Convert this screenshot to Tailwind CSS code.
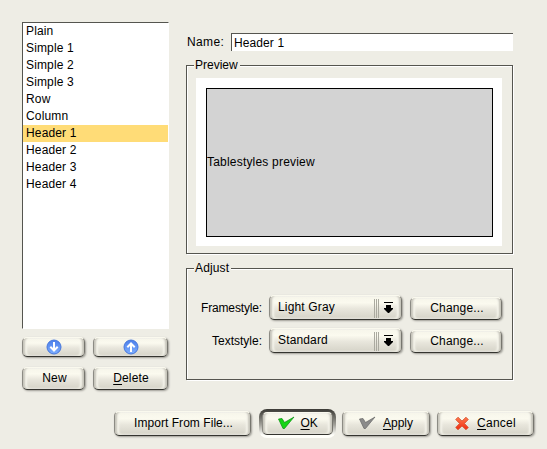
<!DOCTYPE html>
<html lang="en">
<head>
<meta charset="utf-8">
<title>Table styles</title>
<script src="https://cdn.jsdelivr.net/npm/@tailwindcss/browser@4"></script>
</head>
<body class="w-[547px] h-[449px] overflow-hidden bg-[#eeede5] font-['Liberation_Sans',Arial,sans-serif] text-[12px] leading-[17px] tracking-[0.15px] text-black">
<main class="h-[449px] pl-[22px] pt-[22px]">
  <div class="flex h-[387px]">
    <section class="w-[147px]">
      <ul class="h-[307px] border-t border-l border-r border-b border-t-[#55554f] border-l-[#55554f] border-r-white border-b-white bg-white">
        <li class="pl-[3px]">Plain</li>
        <li class="pl-[3px]">Simple 1</li>
        <li class="pl-[3px]">Simple 2</li>
        <li class="pl-[3px]">Simple 3</li>
        <li class="pl-[3px]">Row</li>
        <li class="pl-[3px]">Column</li>
        <li class="pl-[3px] bg-[#ffdc77]">Header 1</li>
        <li class="pl-[3px]">Header 2</li>
        <li class="pl-[3px]">Header 3</li>
        <li class="pl-[3px]">Header 4</li>
      </ul>
      <div class="mt-[8px] flex gap-[8px]">
        <button class="flex items-center justify-center rounded-[5px] border border-t-[#faf9ee] border-b-[#34342f] border-l-[#8c8b84] border-r-[#77766f] bg-[linear-gradient(#f6f5ea,#fbfaef_28%,#e8e6dc_55%,#d9d7cc_90%,#e4e2d8)] shadow-[inset_3px_0_2px_-1px_#c6c4ba,inset_5px_0_2px_-1px_#f8f7ee,inset_-3px_0_2px_-1px_#c6c4ba,inset_-5px_0_2px_-1px_#f8f7ee,1px_1px_2px_#9e9d96] w-[63px] h-[20px]" aria-label="Move down"><svg width="16" height="16" viewBox="0 0 16 16"><defs><linearGradient id="blue" x1="0" y1="0" x2="0" y2="1"><stop stop-color="#4c7fea"/><stop offset="1" stop-color="#7cadff"/></linearGradient></defs><circle cx="8" cy="8" r="7" fill="url(#blue)" stroke="#4777dc"/><path d="M8 3v8M4.300 7.800 8 11.500l3.700-3.700" fill="none" stroke="#fff" stroke-width="2"/></svg></button>
        <button class="flex items-center justify-center rounded-[5px] border border-t-[#faf9ee] border-b-[#34342f] border-l-[#8c8b84] border-r-[#77766f] bg-[linear-gradient(#f6f5ea,#fbfaef_28%,#e8e6dc_55%,#d9d7cc_90%,#e4e2d8)] shadow-[inset_3px_0_2px_-1px_#c6c4ba,inset_5px_0_2px_-1px_#f8f7ee,inset_-3px_0_2px_-1px_#c6c4ba,inset_-5px_0_2px_-1px_#f8f7ee,1px_1px_2px_#9e9d96] w-[75px] h-[20px]" aria-label="Move up"><svg width="16" height="16" viewBox="0 0 16 16"><circle cx="8" cy="8" r="7" fill="url(#blue)" stroke="#4777dc"/><path d="M8 13V5M4.300 8.200 8 4.500l3.700 3.700" fill="none" stroke="#fff" stroke-width="2"/></svg></button>
      </div>
      <div class="mt-[10px] flex gap-[8px]">
        <button class="flex items-center justify-center rounded-[5px] border border-t-[#faf9ee] border-b-[#34342f] border-l-[#8c8b84] border-r-[#77766f] bg-[linear-gradient(#f6f5ea,#fbfaef_28%,#e8e6dc_55%,#d9d7cc_90%,#e4e2d8)] shadow-[inset_3px_0_2px_-1px_#c6c4ba,inset_5px_0_2px_-1px_#f8f7ee,inset_-3px_0_2px_-1px_#c6c4ba,inset_-5px_0_2px_-1px_#f8f7ee,1px_1px_2px_#9e9d96] w-[63px] h-[23px]"><span class="pl-[2px]">New</span></button>
        <button class="flex items-center justify-center rounded-[5px] border border-t-[#faf9ee] border-b-[#34342f] border-l-[#8c8b84] border-r-[#77766f] bg-[linear-gradient(#f6f5ea,#fbfaef_28%,#e8e6dc_55%,#d9d7cc_90%,#e4e2d8)] shadow-[inset_3px_0_2px_-1px_#c6c4ba,inset_5px_0_2px_-1px_#f8f7ee,inset_-3px_0_2px_-1px_#c6c4ba,inset_-5px_0_2px_-1px_#f8f7ee,1px_1px_2px_#9e9d96] w-[75px] h-[23px]"><span class="pl-[1px]"><u class="underline-offset-2">D</u>elete</span></button>
      </div>
    </section>
    <section class="ml-[17px] w-[328px] pt-[11px]">
      <div class="flex h-[19px]">
        <label class="w-[45px] pl-[1px] pt-px tracking-[0.35px]">Name:</label>
        <div class="w-[282px] h-[18px] border-t border-l border-[#55554f] bg-white pl-[2px] pt-[1px] tracking-[0.1px]">Header 1</div>
      </div>
      <div class="relative mt-[13px] w-[327px] h-[189px] border border-[#55554f] shadow-[1px_1px_0_#fff,inset_1px_1px_0_#fff] pl-[9px] pt-[12px]">
        <h2 class="absolute left-[7px] -top-[9px] bg-[#eeede5] pl-[1px] pr-[2px] tracking-normal">Preview</h2>
        <div class="w-[306px] h-[168px] bg-white p-[10px]">
          <div class="w-[287px] h-[149px] border border-black bg-[#d3d3d3] flex items-center tracking-[0.2px]">Tablestyles preview</div>
        </div>
      </div>
      <div class="relative mt-[14px] w-[327px] h-[112px] border border-[#55554f] shadow-[1px_1px_0_#fff,inset_1px_1px_0_#fff] pt-[26px]">
        <h2 class="absolute left-[7px] -top-[9px] bg-[#eeede5] pl-[1px] pr-[2px]">Adjust</h2>
        <div class="flex h-[33px]">
          <label class="w-[75px] text-right mt-[5px] tracking-[-0.15px]">Framestyle:</label>
          <div class="flex items-center justify-center rounded-[5px] border border-t-[#faf9ee] border-b-[#34342f] border-l-[#8c8b84] border-r-[#77766f] bg-[linear-gradient(#f6f5ea,#fbfaef_28%,#e8e6dc_55%,#d9d7cc_90%,#e4e2d8)] shadow-[inset_3px_0_2px_-1px_#c6c4ba,inset_5px_0_2px_-1px_#f8f7ee,inset_-3px_0_2px_-1px_#c6c4ba,inset_-5px_0_2px_-1px_#f8f7ee,1px_1px_2px_#9e9d96] ml-[7px] w-[133px] h-[25px]"><span class="flex-1 pl-[8px]">Light Gray</span><svg class="mr-[4px]" width="24" height="21"><path d="M1.500 2v19M3.500 2v19M5.500 2v19" stroke="#aaa99f"/><path d="M11 5h9v1h-9zM13 8h5v3h2v1l-4 4h-1l-4-4v-1h2z"/></svg></div>
          <button class="flex items-center justify-center rounded-[5px] border border-t-[#faf9ee] border-b-[#34342f] border-l-[#8c8b84] border-r-[#77766f] bg-[linear-gradient(#f6f5ea,#fbfaef_28%,#e8e6dc_55%,#d9d7cc_90%,#e4e2d8)] shadow-[inset_3px_0_2px_-1px_#c6c4ba,inset_5px_0_2px_-1px_#f8f7ee,inset_-3px_0_2px_-1px_#c6c4ba,inset_-5px_0_2px_-1px_#f8f7ee,1px_1px_2px_#9e9d96] ml-[8px] mt-[2px] w-[92px] h-[23px]"><span class="pl-[2px]">Change...</span></button>
        </div>
        <div class="flex h-[33px]">
          <label class="w-[75px] text-right mt-[5px] tracking-normal">Textstyle:</label>
          <div class="flex items-center justify-center rounded-[5px] border border-t-[#faf9ee] border-b-[#34342f] border-l-[#8c8b84] border-r-[#77766f] bg-[linear-gradient(#f6f5ea,#fbfaef_28%,#e8e6dc_55%,#d9d7cc_90%,#e4e2d8)] shadow-[inset_3px_0_2px_-1px_#c6c4ba,inset_5px_0_2px_-1px_#f8f7ee,inset_-3px_0_2px_-1px_#c6c4ba,inset_-5px_0_2px_-1px_#f8f7ee,1px_1px_2px_#9e9d96] ml-[7px] w-[133px] h-[25px]"><span class="flex-1 pl-[8px]">Standard</span><svg class="mr-[4px]" width="24" height="21"><path d="M1.500 2v19M3.500 2v19M5.500 2v19" stroke="#aaa99f"/><path d="M11 5h9v1h-9zM13 8h5v3h2v1l-4 4h-1l-4-4v-1h2z"/></svg></div>
          <button class="flex items-center justify-center rounded-[5px] border border-t-[#faf9ee] border-b-[#34342f] border-l-[#8c8b84] border-r-[#77766f] bg-[linear-gradient(#f6f5ea,#fbfaef_28%,#e8e6dc_55%,#d9d7cc_90%,#e4e2d8)] shadow-[inset_3px_0_2px_-1px_#c6c4ba,inset_5px_0_2px_-1px_#f8f7ee,inset_-3px_0_2px_-1px_#c6c4ba,inset_-5px_0_2px_-1px_#f8f7ee,1px_1px_2px_#9e9d96] ml-[8px] mt-[2px] w-[92px] h-[23px]"><span class="pl-[2px]">Change...</span></button>
        </div>
      </div>
    </section>
  </div>
  <footer class="flex pl-[92px] pt-[2px]">
    <button class="flex items-center justify-center rounded-[5px] border border-t-[#faf9ee] border-b-[#34342f] border-l-[#8c8b84] border-r-[#77766f] bg-[linear-gradient(#f6f5ea,#fbfaef_28%,#e8e6dc_55%,#d9d7cc_90%,#e4e2d8)] shadow-[inset_3px_0_2px_-1px_#c6c4ba,inset_5px_0_2px_-1px_#f8f7ee,inset_-3px_0_2px_-1px_#c6c4ba,inset_-5px_0_2px_-1px_#f8f7ee,1px_1px_2px_#9e9d96] w-[137px] h-[25px]"><span class="-mt-px pl-[2px] tracking-[0.05px]">Import From File...</span></button>
    <div class="ml-[8px] -mt-[2px] w-[77px] h-[29px] rounded-[8px] p-[3px] bg-[linear-gradient(#3c3b36,#55544e_15%,#a3a29b_55%,#fffffa_90%)]">
      <button class="flex items-center justify-center rounded-[5px] border border-t-[#faf9ee] border-b-[#34342f] border-l-[#8c8b84] border-r-[#77766f] bg-[linear-gradient(#f6f5ea,#fbfaef_28%,#e8e6dc_55%,#d9d7cc_90%,#e4e2d8)] shadow-[inset_3px_0_2px_-1px_#c6c4ba,inset_5px_0_2px_-1px_#f8f7ee,inset_-3px_0_2px_-1px_#c6c4ba,inset_-5px_0_2px_-1px_#f8f7ee] w-[71px] h-[23px]"><svg class="-mt-px" width="17" height="14" viewBox="0 0 17 14"><path d="M.5 3 4 2.500 6.500 6.500 16 1 6.500 12.500H5z" fill="#16d516" stroke="#078b10" stroke-width=".7"/></svg><span class="ml-[6px] tracking-[-0.2px]"><u class="underline-offset-2">O</u>K</span></button>
    </div>
    <button class="flex items-center justify-center rounded-[5px] border border-t-[#faf9ee] border-b-[#34342f] border-l-[#8c8b84] border-r-[#77766f] bg-[linear-gradient(#f6f5ea,#fbfaef_28%,#e8e6dc_55%,#d9d7cc_90%,#e4e2d8)] shadow-[inset_3px_0_2px_-1px_#c6c4ba,inset_5px_0_2px_-1px_#f8f7ee,inset_-3px_0_2px_-1px_#c6c4ba,inset_-5px_0_2px_-1px_#f8f7ee,1px_1px_2px_#9e9d96] ml-[6px] w-[88px] h-[25px]"><svg class="-mt-[2px]" width="17" height="14" viewBox="0 0 17 14"><path d="M.5 3 4 2.500 6.500 6.500 16 1 6.500 12.500H5z" fill="#8b8b8b" stroke="#666" stroke-width=".7"/></svg><span class="ml-[7px] -mt-px tracking-normal"><u class="underline-offset-2">A</u>pply</span></button>
    <button class="flex items-center justify-center rounded-[5px] border border-t-[#faf9ee] border-b-[#34342f] border-l-[#8c8b84] border-r-[#77766f] bg-[linear-gradient(#f6f5ea,#fbfaef_28%,#e8e6dc_55%,#d9d7cc_90%,#e4e2d8)] shadow-[inset_3px_0_2px_-1px_#c6c4ba,inset_5px_0_2px_-1px_#f8f7ee,inset_-3px_0_2px_-1px_#c6c4ba,inset_-5px_0_2px_-1px_#f8f7ee,1px_1px_2px_#9e9d96] ml-[7px] w-[97px] h-[25px]"><svg class="-mt-px" width="14" height="15" viewBox="0 0 14 14"><defs><linearGradient id="red" x1="0" y1="0" x2="0" y2="1"><stop stop-color="#ff7a4d"/><stop offset="1" stop-color="#ee2a10"/></linearGradient></defs><path d="M3 .7 7 4.500 11 .7 13.300 3 9.500 7l3.800 4L11 13.300 7 9.500 3 13.300.7 11l3.800-4L.7 3z" fill="url(#red)" stroke="#d4522f" stroke-width=".8"/></svg><span class="ml-[8px] -mt-px tracking-[0.25px]"><u class="underline-offset-2">C</u>ancel</span></button>
  </footer>
</main>
</body>
</html>
